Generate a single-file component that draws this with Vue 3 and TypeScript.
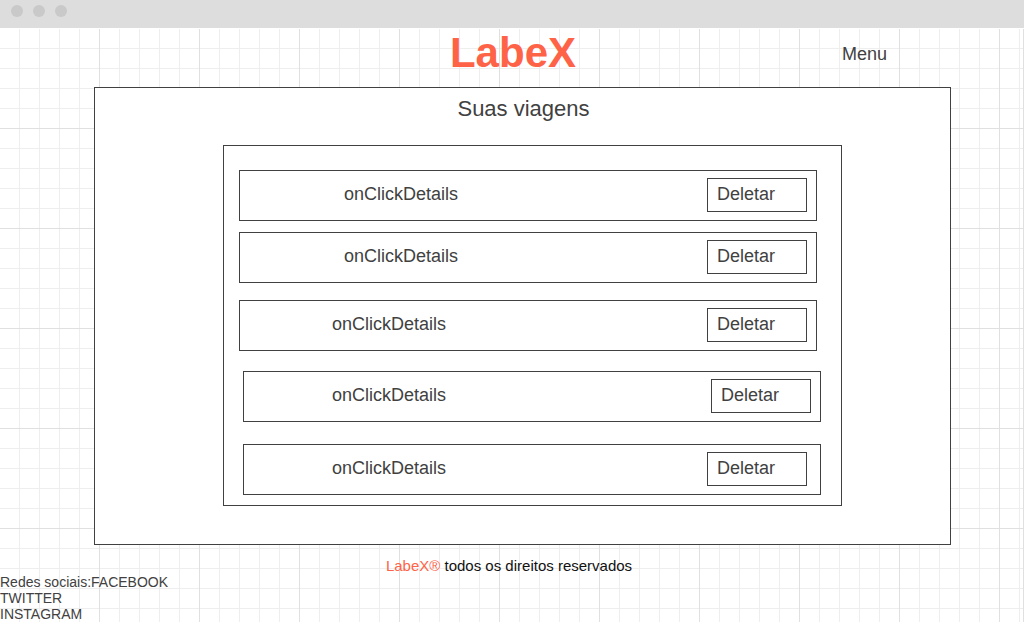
<script setup lang="ts">
interface Trip {
  id: number
  label: string
  layout: string
}

const trips: Trip[] = [
  { id: 1, label: 'onClickDetails', layout: 'indented' },
  { id: 2, label: 'onClickDetails', layout: 'indented near' },
  { id: 3, label: 'onClickDetails', layout: 'apart' },
  { id: 4, label: 'onClickDetails', layout: 'shifted far' },
  { id: 5, label: 'onClickDetails', layout: 'shifted farther inset' },
]

const networks: string[] = ['FACEBOOK', 'TWITTER', 'INSTAGRAM']
</script>

<template>
  <div class="window">
    <div class="titlebar">
      <span v-for="n in 3" :key="n" class="dot"></span>
    </div>
    <div class="page">
      <header class="header">
        <h1 class="brand">LabeX</h1>
        <nav class="nav"><button type="button" class="menu">Menu</button></nav>
      </header>

      <main class="panel">
        <h2 class="heading">Suas viagens</h2>
        <ul class="trips">
          <li v-for="trip in trips" :key="trip.id" class="trip" :class="trip.layout">
            <button type="button" class="details">{{ trip.label }}</button>
            <button type="button" class="delete">Deletar</button>
          </li>
        </ul>
      </main>

      <footer class="footer">
        <p class="rights"><span class="mark">LabeX®</span> todos os direitos reservados</p>
        <div class="social">
          <span>Redes sociais:</span>
          <ul class="networks">
            <li v-for="network in networks" :key="network">
              <a href="#">{{ network }}</a>
            </li>
          </ul>
        </div>
      </footer>
    </div>
  </div>
</template>

<style>
body {
  margin: 0;
}
</style>

<style scoped>
.window {
  display: flex;
  flex-direction: column;
  min-height: 100vh;
  font-family: "Liberation Sans", Arial, sans-serif;
  color: #414141;
  background: #fff;
}
.window * {
  box-sizing: border-box;
}
h1, h2, p, ul {
  margin: 0;
  padding: 0;
  font-weight: normal;
  list-style: none;
}
button {
  margin: 0;
  padding: 0;
  border: 0;
  background: none;
  color: inherit;
  font: inherit;
  text-align: left;
  cursor: pointer;
}
a {
  color: inherit;
  text-decoration: none;
}
.titlebar {
  display: flex;
  gap: 10px;
  height: 28px;
  padding: 5px 11px;
  background: #ddd;
}
.dot {
  width: 12px;
  height: 12px;
  border-radius: 50%;
  background: #c9c9c9;
}
.page {
  flex: 1;
  border-top: 1px solid #fff;
  background-image:
    linear-gradient(to left, #e0e0e0 1px, transparent 1px),
    linear-gradient(to left, #e0e0e0 1px, transparent 1px),
    linear-gradient(to top, #e0e0e0 1px, transparent 1px),
    linear-gradient(to left, #eee 1px, transparent 1px),
    linear-gradient(to top, #eee 1px, transparent 1px);
  background-size: 100% 100%, 100px 100px, 100px 100px, 20px 20px, 20px 20px;
}
.header {
  display: grid;
  grid-template-columns: 1fr auto 1fr;
  align-items: center;
  height: 58px;
  padding: 0 0 8px 2px;
}
.brand {
  grid-column: 2;
  padding-bottom: 2px;
  font-size: 42px;
  line-height: 48px;
  font-weight: bold;
  color: #ff6347;
}
.nav {
  justify-self: end;
  margin-right: 137px;
  font-size: 18px;
  line-height: 22px;
}
.panel {
  margin: 0 73px 0 94px;
  padding: 8px 108px 38px 128px;
  border: 1px solid #414141;
  background: #fff;
}
.heading {
  margin-right: 18px;
  font-size: 22px;
  line-height: 26px;
  text-align: center;
}
.trips {
  margin-top: 23px;
  padding: 24px 20px 10px 15px;
  border: 1px solid #414141;
}
.trip {
  display: flex;
  justify-content: space-between;
  align-items: flex-start;
  height: 51px;
  margin-right: 4px;
  padding: 7px 9px 7px 92px;
  border: 1px solid #414141;
  font-size: 18px;
  line-height: 32px;
}
.indented {
  padding-left: 104px;
}
.near {
  margin-top: 11px;
}
.apart {
  margin-top: 17px;
}
.shifted {
  margin-right: 0;
  margin-left: 4px;
  padding-left: 88px;
}
.far {
  margin-top: 20px;
}
.farther {
  margin-top: 22px;
}
.inset {
  padding-right: 13px;
}
.delete {
  width: 100px;
  height: 34px;
  padding: 0 0 2px 9px;
  border: 1px solid #414141;
  line-height: 30px;
}
.rights {
  margin-right: 6px;
  padding-top: 12px;
  font-size: 15px;
  line-height: 17px;
  text-align: center;
  color: #111;
}
.mark {
  color: #ff6347;
}
.social {
  display: flex;
  flex-wrap: wrap;
  font-size: 14px;
  line-height: 16px;
}
.networks {
  display: contents;
}
.networks li:not(:first-child) {
  width: 100%;
}
</style>
